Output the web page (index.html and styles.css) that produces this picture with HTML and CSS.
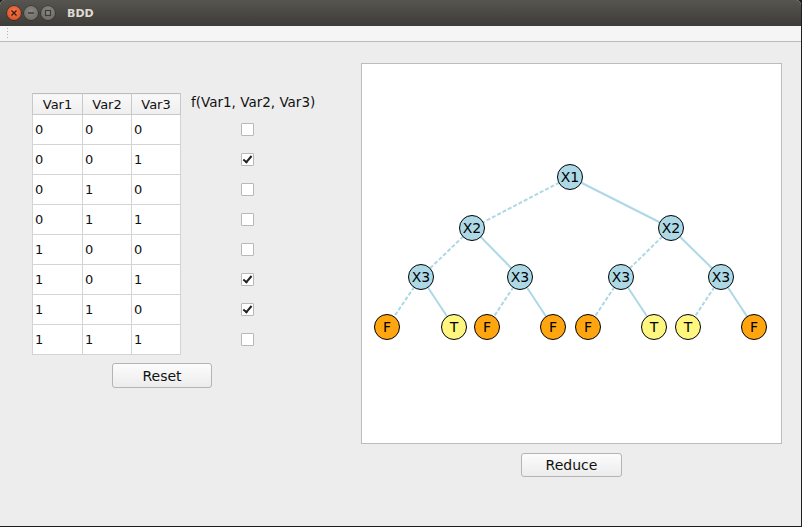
FILE: index.html
```html
<!DOCTYPE html>
<html>
<head>
<meta charset="utf-8">
<title>BDD</title>
<link rel="stylesheet" href="styles.css">
</head>
<body>
<div class="window">
  <div class="titlebar">
    <div class="winbtns">
      <span class="wbtn close"><svg width="14" height="14" viewBox="0 0 14 14"><path d="M4.5 4.5 L9.5 9.5 M9.5 4.5 L4.5 9.5" stroke="#3a1a10" stroke-width="1.3"/></svg></span>
      <span class="wbtn min"><svg width="14" height="14" viewBox="0 0 14 14"><path d="M4 7 H10" stroke="#3c3b37" stroke-width="1.4"/></svg></span>
      <span class="wbtn max"><svg width="14" height="14" viewBox="0 0 14 14"><rect x="4.5" y="4.5" width="5" height="5" fill="none" stroke="#3c3b37" stroke-width="1.2"/></svg></span>
    </div>
    <span class="title">BDD</span>
  </div>
  <div class="toolbar"><span class="grip"></span></div>
  <div class="main">
    <div class="left">
      <div class="truth">
        <table class="tt">
          <thead>
            <tr><th>Var1</th><th>Var2</th><th>Var3</th></tr>
          </thead>
          <tbody>
            <tr><td>0</td><td>0</td><td>0</td></tr>
            <tr><td>0</td><td>0</td><td>1</td></tr>
            <tr><td>0</td><td>1</td><td>0</td></tr>
            <tr><td>0</td><td>1</td><td>1</td></tr>
            <tr><td>1</td><td>0</td><td>0</td></tr>
            <tr><td>1</td><td>0</td><td>1</td></tr>
            <tr><td>1</td><td>1</td><td>0</td></tr>
            <tr><td>1</td><td>1</td><td>1</td></tr>
          </tbody>
        </table>
        <div class="fcol">
          <div class="flabel">f(Var1, Var2, Var3)</div>
          <div class="cbrow"><span class="cb"></span></div>
          <div class="cbrow"><span class="cb on"></span></div>
          <div class="cbrow"><span class="cb"></span></div>
          <div class="cbrow"><span class="cb"></span></div>
          <div class="cbrow"><span class="cb"></span></div>
          <div class="cbrow"><span class="cb on"></span></div>
          <div class="cbrow"><span class="cb on"></span></div>
          <div class="cbrow"><span class="cb"></span></div>
        </div>
      </div>
      <button class="btn reset">Reset</button>
    </div>
    <div class="right">
      <div class="canvas">
        <svg width="419" height="379" viewBox="362 64 419 379">
          <g stroke="#add8e6" stroke-width="2" fill="none">
            <line x1="570" y1="177" x2="472" y2="228" stroke-dasharray="4 2"/>
            <line x1="570" y1="177" x2="671" y2="228"/>
            <line x1="472" y1="228" x2="421" y2="277" stroke-dasharray="4 2"/>
            <line x1="472" y1="228" x2="520" y2="277"/>
            <line x1="671" y1="228" x2="621" y2="277" stroke-dasharray="4 2"/>
            <line x1="671" y1="228" x2="721" y2="277"/>
            <line x1="421" y1="277" x2="387" y2="327" stroke-dasharray="4 2"/>
            <line x1="421" y1="277" x2="454" y2="327"/>
            <line x1="520" y1="277" x2="487" y2="327" stroke-dasharray="4 2"/>
            <line x1="520" y1="277" x2="553" y2="327"/>
            <line x1="621" y1="277" x2="588" y2="327" stroke-dasharray="4 2"/>
            <line x1="621" y1="277" x2="654" y2="327"/>
            <line x1="721" y1="277" x2="688" y2="327" stroke-dasharray="4 2"/>
            <line x1="721" y1="277" x2="754" y2="327"/>
          </g>
          <g stroke="#000" stroke-width="1">
            <circle class="nv" cx="570" cy="177" r="12.5"/>
            <circle class="nv" cx="472" cy="228" r="12.5"/>
            <circle class="nv" cx="671" cy="228" r="12.5"/>
            <circle class="nv" cx="421" cy="277" r="12.5"/>
            <circle class="nv" cx="520" cy="277" r="12.5"/>
            <circle class="nv" cx="621" cy="277" r="12.5"/>
            <circle class="nv" cx="721" cy="277" r="12.5"/>
            <circle class="nf" cx="387" cy="327" r="12.5"/>
            <circle class="nt" cx="454" cy="327" r="12.5"/>
            <circle class="nf" cx="487" cy="327" r="12.5"/>
            <circle class="nf" cx="553" cy="327" r="12.5"/>
            <circle class="nf" cx="588" cy="327" r="12.5"/>
            <circle class="nt" cx="654" cy="327" r="12.5"/>
            <circle class="nt" cx="688" cy="327" r="12.5"/>
            <circle class="nf" cx="754" cy="327" r="12.5"/>
          </g>
          <g class="lbl" text-anchor="middle">
            <text x="570" y="182">X1</text>
            <text x="472" y="233">X2</text>
            <text x="671" y="233">X2</text>
            <text x="421" y="282">X3</text>
            <text x="520" y="282">X3</text>
            <text x="621" y="282">X3</text>
            <text x="721" y="282">X3</text>
            <text x="387" y="332">F</text>
            <text x="454" y="332">T</text>
            <text x="487" y="332">F</text>
            <text x="553" y="332">F</text>
            <text x="588" y="332">F</text>
            <text x="654" y="332">T</text>
            <text x="688" y="332">T</text>
            <text x="754" y="332">F</text>
          </g>
        </svg>
      </div>
      <button class="btn reduce">Reduce</button>
    </div>
  </div>
</div>
</body>
</html>
```

FILE: styles.css
```css
html, body {
  margin: 0;
  padding: 0;
  background: #1e1e1e;
}
body {
  font-family: "DejaVu Sans", "Open Sans", sans-serif;
  font-size: 13px;
  color: #111;
}
.window {
  width: 801px;
  height: 526px;
  background: #ededed;
  display: flex;
  flex-direction: column;
  overflow: hidden;
  border-radius: 5px 5px 0 0;
}
.titlebar {
  height: 26px;
  flex: none;
  background: linear-gradient(#57554f, #3d3c38);
  display: flex;
  align-items: center;
}
.winbtns {
  display: flex;
  gap: 3px;
  margin-left: 7px;
}
.wbtn {
  width: 14px;
  height: 14px;
  border-radius: 50%;
  display: flex;
}
.wbtn.close {
  background: radial-gradient(circle at 50% 40%, #f37b4e, #d9471c);
  box-shadow: 0 0 0 0.5px #2a1a12;
}
.wbtn.min, .wbtn.max {
  background: radial-gradient(circle at 50% 40%, #8c8a84, #66645f);
  box-shadow: 0 0 0 0.5px #2a2926;
}
.title {
  margin-left: 12px;
  font-family: "DejaVu Sans", sans-serif;
  font-weight: bold;
  font-size: 11px;
  color: #dfdbd2;
}
.toolbar {
  height: 15px;
  flex: none;
  background: #f5f5f5;
  border-bottom: 1px solid #bcbcbc;
  display: flex;
  align-items: stretch;
}
.grip {
  width: 3px;
  margin: 1px 0 1px 6px;
  background-image: radial-gradient(circle, #b5b5b5 0.7px, transparent 0.8px);
  background-size: 3px 3px;
}
.main {
  flex: 1;
  display: flex;
  padding-top: 21px;
}
.left {
  margin-left: 32px;
  margin-top: 30px;
  width: 300px;
  display: flex;
  flex-direction: column;
}
.truth {
  display: flex;
}
.tt {
  border-collapse: collapse;
  background: #fff;
  border: 1px solid #bcbcbc;
  border-left: 1px solid #a8a8a8;
  font-size: 13px;
}
.tt th {
  height: 20px;
  padding: 0;
  font-weight: normal;
  background: linear-gradient(#f9f9f9, #efefef);
  border: 1px solid #c8c8c8;
  border-top: none;
  text-align: center;
  color: #111;
}
.tt th:nth-child(1) { width: 49px; }
.tt th:nth-child(2) { width: 48px; }
.tt th:nth-child(3) { width: 48px; }
.tt td {
  height: 29px;
  padding: 0 0 0 2px;
  border: 1px solid #d4d4d4;
  text-align: left;
}
.fcol {
  margin-left: 10px;
  display: flex;
  flex-direction: column;
}
.flabel {
  height: 21px;
  line-height: 19px;
  font-size: 13.5px;
  white-space: nowrap;
}
.cbrow {
  height: 30px;
  padding-left: 50px;
  display: flex;
  align-items: center;
}
.cb {
  width: 11px;
  height: 11px;
  border: 1px solid #b8b8b8;
  background: #fff;
  border-radius: 1px;
  position: relative;
}
.cb.on::after {
  content: "";
  position: absolute;
  left: 3px;
  top: 0px;
  width: 3px;
  height: 7px;
  border-right: 2px solid #222;
  border-bottom: 2px solid #222;
  transform: rotate(40deg);
}
.btn {
  font-family: inherit;
  font-size: 14px;
  color: #111;
  background: linear-gradient(#fcfcfc, #ececec);
  border: 1px solid #b4b4b4;
  border-radius: 3px;
  padding: 0;
}
.reset {
  width: 100px;
  height: 25px;
  margin-top: 8px;
  margin-left: 80px;
}
.right {
  margin-left: 29px;
  display: flex;
  flex-direction: column;
  align-items: center;
}
.canvas {
  width: 421px;
  height: 381px;
  box-sizing: border-box;
  border: 1px solid #bcbcbc;
  background: #fff;
}
.canvas svg {
  display: block;
}
.nv { fill: #add8e6; }
.nf { fill: #ffa510; }
.nt { fill: #fff680; }
.lbl {
  font-family: "DejaVu Sans", sans-serif;
  font-size: 14px;
  fill: #000;
}
.reduce {
  width: 101px;
  height: 24px;
  margin-top: 9px;
}
```
